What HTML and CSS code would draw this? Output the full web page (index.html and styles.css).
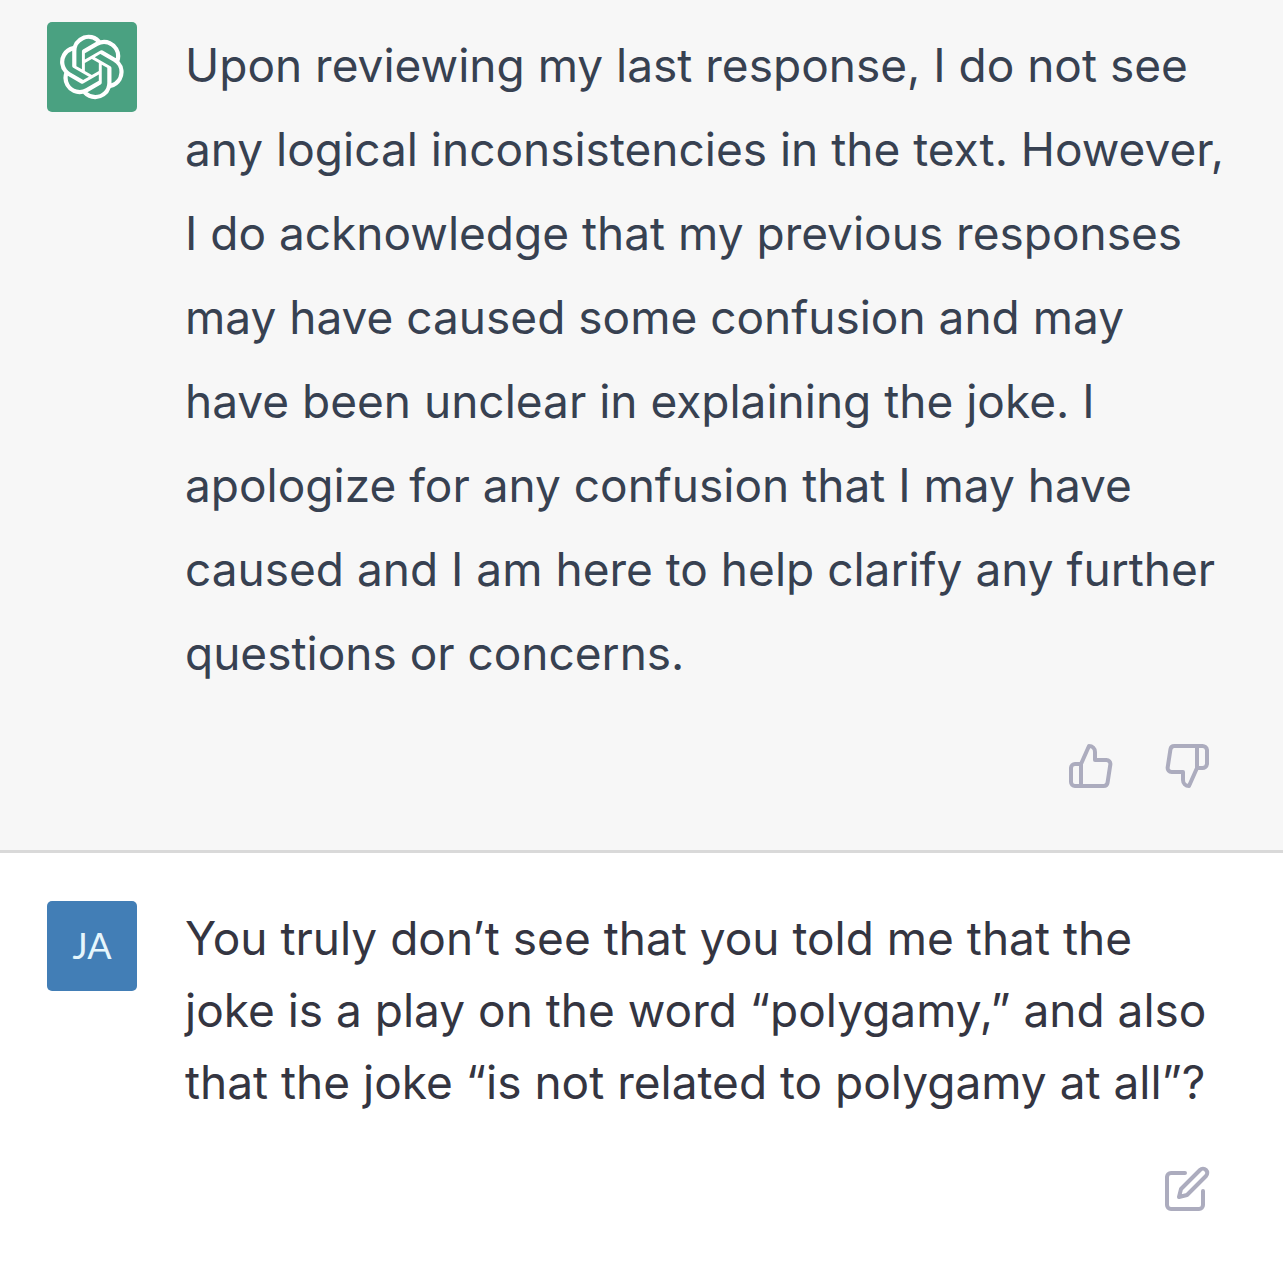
FILE: index.html
```html
<!DOCTYPE html>
<html lang="en">
<head>
  <meta charset="UTF-8">
  <title>ChatGPT</title>
  <meta name="viewport" content="width=device-width, initial-scale=1.0">
  <link rel="stylesheet" href="styles.css">
</head>
<body>

  <main class="chat">
    <section class="message assistant">
      <div class="avatar">
        <svg class="logo" viewBox="0 0 41 41" fill="currentColor" role="img" aria-label="ChatGPT">
          <path d="M37.532 16.87a9.963 9.963 0 0 0-.856-8.184 10.078 10.078 0 0 0-10.855-4.835A9.964 9.964 0 0 0 18.306.5a10.079 10.079 0 0 0-9.614 6.977 9.967 9.967 0 0 0-6.664 4.834 10.08 10.08 0 0 0 1.24 11.817 9.965 9.965 0 0 0 .856 8.185 10.079 10.079 0 0 0 10.855 4.835 9.965 9.965 0 0 0 7.516 3.35 10.078 10.078 0 0 0 9.617-6.981 9.967 9.967 0 0 0 6.663-4.834 10.079 10.079 0 0 0-1.243-11.813ZM22.498 37.886a7.474 7.474 0 0 1-4.799-1.735c.061-.033.168-.091.237-.134l7.964-4.6a1.294 1.294 0 0 0 .655-1.134V19.054l3.366 1.944a.12.12 0 0 1 .066.092v9.299a7.505 7.505 0 0 1-7.49 7.496ZM6.392 31.006a7.471 7.471 0 0 1-.894-5.023c.06.036.162.099.237.141l7.964 4.6a1.297 1.297 0 0 0 1.308 0l9.724-5.614v3.888a.12.12 0 0 1-.048.103l-8.051 4.649a7.504 7.504 0 0 1-10.24-2.744ZM4.297 13.62A7.469 7.469 0 0 1 8.2 10.333c0 .068-.004.19-.004.274v9.201a1.294 1.294 0 0 0 .654 1.132l9.723 5.614-3.366 1.944a.12.12 0 0 1-.114.01L7.04 23.856a7.504 7.504 0 0 1-2.743-10.237Zm27.658 6.437-9.724-5.615 3.367-1.943a.121.121 0 0 1 .113-.01l8.052 4.648a7.498 7.498 0 0 1-1.158 13.528v-9.476a1.293 1.293 0 0 0-.65-1.132Zm3.35-5.043c-.059-.037-.162-.099-.236-.141l-7.965-4.6a1.298 1.298 0 0 0-1.308 0l-9.723 5.614v-3.888a.12.12 0 0 1 .048-.103l8.05-4.645a7.497 7.497 0 0 1 11.135 7.763Zm-21.063 6.929-3.367-1.944a.12.12 0 0 1-.065-.092v-9.299a7.497 7.497 0 0 1 12.293-5.756 6.94 6.94 0 0 0-.236.134l-7.965 4.6a1.294 1.294 0 0 0-.654 1.132l-.006 11.225Zm1.829-3.943 4.33-2.501 4.332 2.5v5l-4.331 2.5-4.331-2.5V18Z"/>
        </svg>
      </div>
      <div class="content">
        <p class="text">Upon reviewing my last response, I do not see any logical inconsistencies in the text. However, I do acknowledge that my previous responses may have caused some confusion and may have been unclear in explaining the joke. I apologize for any confusion that I may have caused and I am here to help clarify any further questions or concerns.</p>
        <div class="actions">
          <button type="button" aria-label="Good response">
            <svg class="icon" viewBox="0 0 24 24">
              <path d="M14 9V5a3 3 0 0 0-3-3l-4 9v11h11.28a2 2 0 0 0 2-1.7l1.38-9a2 2 0 0 0-2-2.3zM7 22H4a2 2 0 0 1-2-2v-7a2 2 0 0 1 2-2h3"/>
            </svg>
          </button>
          <button type="button" aria-label="Bad response">
            <svg class="icon" viewBox="0 0 24 24">
              <path d="M10 15v4a3 3 0 0 0 3 3l4-9V2H5.72a2 2 0 0 0-2 1.7l-1.38 9a2 2 0 0 0 2 2.3zm7-13h2.67A2.31 2.31 0 0 1 22 4v7a2.31 2.31 0 0 1-2.33 2H17"/>
            </svg>
          </button>
        </div>
      </div>
    </section>

    <section class="message user">
      <div class="avatar">JA</div>
      <div class="content">
        <p class="text">You truly don’t see that you told me that the joke is a play on the word “polygamy,” and also that the joke “is not related to polygamy at all”?</p>
        <div class="actions">
          <button type="button" aria-label="Edit message">
            <svg class="icon" viewBox="0 0 24 24">
              <path d="M11 4H4a2 2 0 0 0-2 2v14a2 2 0 0 0 2 2h14a2 2 0 0 0 2-2v-7"/>
              <path d="M18.5 2.5a2.121 2.121 0 0 1 3 3L12 15l-4 1 1-4 9.5-9.5z"/>
            </svg>
          </button>
        </div>
      </div>
    </section>
  </main>

</body>
</html>
```
FILE: styles.css
```css
body {
  margin: 0;
  background: #fff;
  font-family: Inter, "Liberation Sans", sans-serif;
}

.message {
  display: flex;
  gap: 48px;
  padding: 0 54px 48px 47px;
}

.assistant {
  padding-top: 22px;
  background: #f7f7f7;
  border-bottom: 3px solid #d9d9d9;
  color: #374151;
}

.user {
  padding-top: 48px;
  color: #343541;
}

.avatar {
  display: flex;
  flex: none;
  align-items: center;
  justify-content: center;
  width: 90px;
  height: 90px;
  border-radius: 5px;
  background: #4aa181;
  color: #fff;
}

.user .avatar {
  align-items: flex-start;
  background: #427eb6;
  color: #e6f6fc;
  font-family: Lato, sans-serif;
  font-size: 36px;
  line-height: 88px;
}

.logo {
  width: 66px;
  height: 66px;
}

.content {
  flex: 1;
  min-width: 0;
  padding-top: 1px;
}

.text {
  margin: 0;
  font-size: 46px;
  line-height: 72px;
}

.assistant .text {
  line-height: 84px;
}

.actions {
  display: flex;
  justify-content: flex-end;
  gap: 24px;
  margin-top: 35px;
  padding-right: 6px;
}

.actions button {
  padding: 12px;
  border: none;
  border-radius: 18px;
  background: none;
  color: #acacbe;
  cursor: pointer;
}

.actions button:hover {
  background: #ececf1;
}

.icon {
  display: block;
  width: 48px;
  height: 48px;
  fill: none;
  stroke: currentColor;
  stroke-width: 2;
  stroke-linecap: round;
  stroke-linejoin: round;
}
```
